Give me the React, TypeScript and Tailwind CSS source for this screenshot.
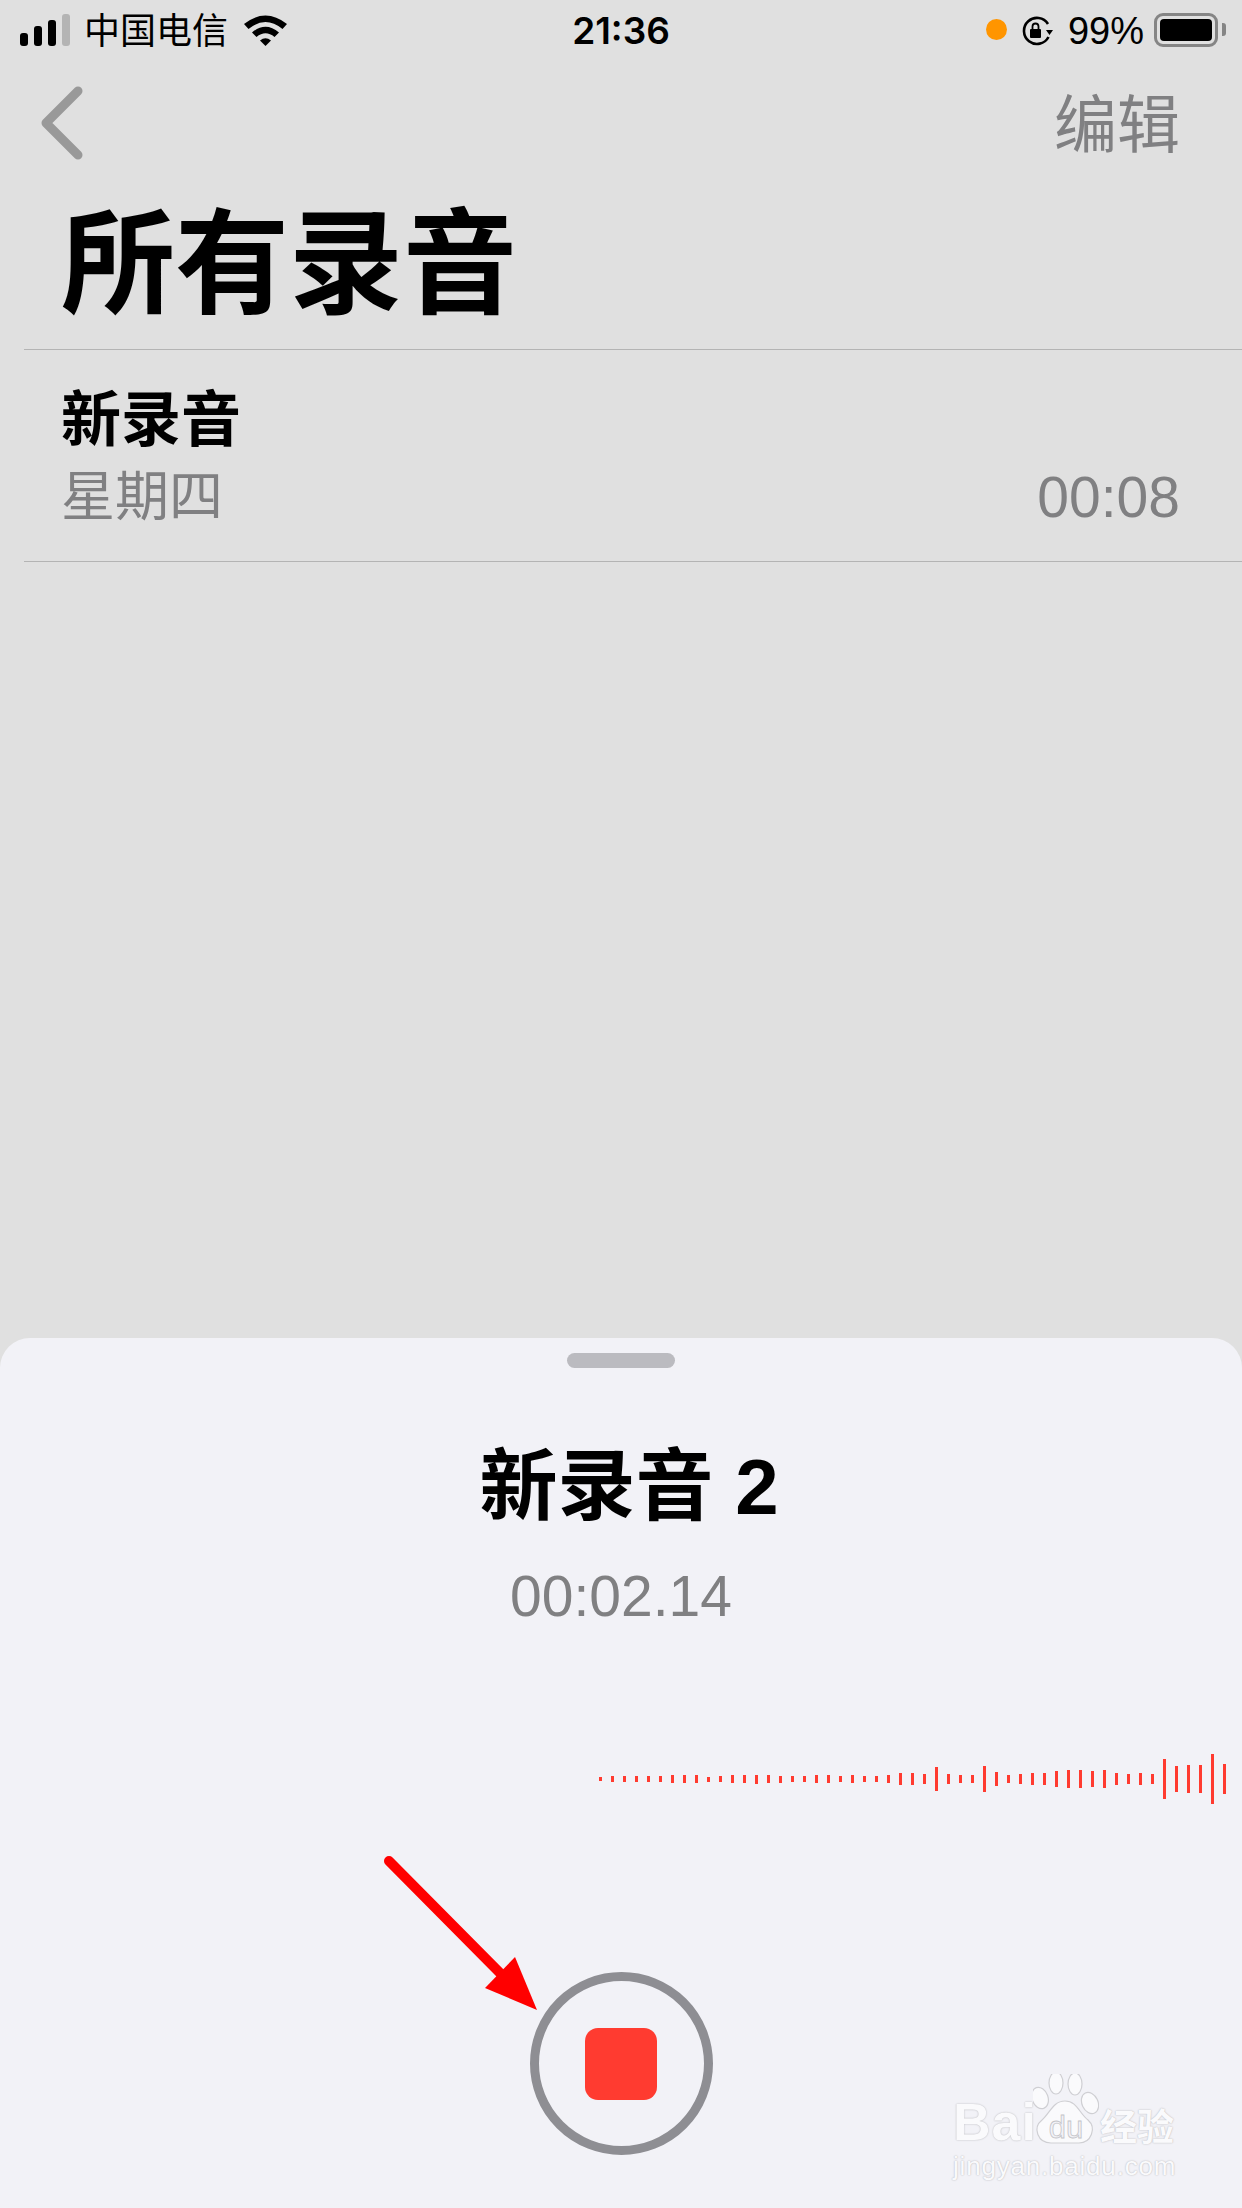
const BARS = [4, 6, 6, 6, 6, 6, 8, 8, 8, 5, 6, 8, 8, 9, 8, 7, 6, 6, 8, 8, 6, 8, 6, 6, 8, 12, 12, 10, 24, 10, 8, 8, 26, 14, 8, 10, 12, 12, 16, 18, 18, 16, 18, 12, 10, 12, 10, 40, 26, 28, 28, 50, 30];

const LATIN = "font-['Liberation_Sans','Noto_Sans_CJK_SC',sans-serif]";
const GLOW = "[text-shadow:0_0_2px_#c4c4c8,0_0_1px_#c4c4c8]";

function StatusBar() {
  return (
    <div className={`${LATIN} h-[62px] shrink-0 grid grid-cols-3 items-center text-black`}>
      <div className="flex items-center pl-[20px]">
        <div className="flex items-end gap-[6px] h-[32px] mt-[-2px]">
          <div className="w-[8px] h-[13px] rounded-[3px] bg-black" />
          <div className="w-[8px] h-[20px] rounded-[3px] bg-black" />
          <div className="w-[8px] h-[26px] rounded-[3px] bg-black" />
          <div className="w-[8px] h-[32px] rounded-[3px] bg-[#b4b4b4]" />
        </div>
        <span className="ml-[14px] mt-[2px] text-[36px] leading-[40px]">中国电信</span>
        <svg className="ml-[14px] mt-[-3px]" width="47" height="33" viewBox="0 0 47 33">
          <path d="M2 11 Q23.5 -6 45 11 L40.5 16 Q23.5 2 6.5 16 Z" fill="#000" />
          <path d="M10 19.5 Q23.5 8 37 19.5 L32.5 24 Q23.5 16.5 14.5 24 Z" fill="#000" />
          <path d="M18 27.5 Q23.5 23 29 27.5 L23.5 33 Z" fill="#000" />
        </svg>
      </div>
      <div className="text-center font-['Inter',sans-serif] text-[37px] leading-[40px] font-semibold">21:36</div>
      <div className="flex items-center justify-end pr-[16px]">
        <div className="w-[21px] h-[21px] rounded-full bg-[#ff9500] mt-[-3px]" />
        <svg className="ml-[14px]" width="32" height="30" viewBox="0 0 32 30">
          <path d="M27 8 A13 13 0 1 0 27.5 21" fill="none" stroke="#000" strokeWidth="2.6" />
          <path d="M25 14 L32 14 L28.5 19 Z" fill="#000" />
          <rect x="9" y="13" width="11" height="9" rx="1" fill="#000" />
          <path d="M11.5 13 V10.5 A3 3 0 0 1 17.5 10.5 V13" fill="none" stroke="#000" strokeWidth="1.8" />
        </svg>
        <span className="ml-[15px] text-[38px] leading-[40px]">99%</span>
        <div className="ml-[10px] w-[64px] h-[34px] rounded-[9px] border-[3px] border-[#858585] p-[3px] mt-[-3px]">
          <div className="w-full h-full rounded-[4px] bg-black" />
        </div>
        <div className="ml-[4px] w-[4px] h-[13px] rounded-r-[3px] bg-[#858585] mt-[-3px]" />
      </div>
    </div>
  );
}

function Watermark() {
  return (
    <div className="absolute left-[953px] top-[2074px] w-[230px] select-none text-[#fafafc]">
      <div className="flex items-end h-[72px]">
        <span className={`${LATIN} ${GLOW} text-[52px] leading-[52px] font-bold tracking-[1px] mb-[-2px]`}>Bai</span>
        <svg className="ml-[-4px]" width="66" height="72" viewBox="0 0 66 72">
          <g fill="#fafafc" stroke="#cfcfd3" strokeWidth="1.2">
            <ellipse cx="7" cy="24" rx="8" ry="11" transform="rotate(-20 7 24)" />
            <ellipse cx="23" cy="9" rx="7" ry="11" />
            <ellipse cx="42" cy="10" rx="7" ry="11" />
            <ellipse cx="57" cy="29" rx="8" ry="11" transform="rotate(-25 57 29)" />
            <path d="M32 27 C44 27 46 39 55 46 C64 54 58 69 46 69 L18 69 C5 69 -1 54 9 46 C17 39 20 27 32 27 Z" />
          </g>
          <text x="33" y="64" textAnchor="middle" fontFamily="Liberation Sans" fontSize="31" fill="#f2f2f7" stroke="#c4c4c8" strokeWidth="0.8">du</text>
        </svg>
        <span className={`ml-[1px] font-['Noto_Sans_CJK_SC',sans-serif] ${GLOW} text-[37px] leading-[42px] font-bold`}>经验</span>
      </div>
      <div className={`${LATIN} ${GLOW} mt-[2px] text-[26px] leading-[36px] tracking-[0.8px] whitespace-nowrap`}>jingyan.baidu.com</div>
    </div>
  );
}

export default function App() {
  return (
    <div className={`${LATIN} relative w-[1242px] h-[2208px] overflow-hidden bg-[#e0e0e0] flex flex-col`}>
      <StatusBar />

      <div className="flex-1">
        <div className="h-[120px] flex items-center justify-between pl-[40px] pr-[62px]">
          <svg className="mt-[2px]" width="44" height="74" viewBox="0 0 44 74">
            <path d="M38 5 L6 37 L38 69" fill="none" stroke="#999999" strokeWidth="9" strokeLinecap="round" strokeLinejoin="round" />
          </svg>
          <span className="mt-[5px] text-[63px] leading-[70px] text-[#808082]">编辑</span>
        </div>

        <h1 className="pl-[61px] pt-[8px] h-[167px] text-[114px] leading-[150px] font-semibold text-black">所有录音</h1>

        <div className="ml-[24px] h-[213px] border-y border-[#b4b4b4] pl-[37px] pr-[62px] flex flex-col">
          <div className="mt-[36px] text-[60px] leading-[70px] font-bold text-black">新录音</div>
          <div className="flex items-center justify-between h-[70px] mt-[6px] text-[#808082]">
            <span className="text-[54px] leading-[70px]">星期四</span>
            <span className="text-[57px] leading-[70px]">00:08</span>
          </div>
        </div>
      </div>

      <div className="h-[870px] shrink-0 rounded-t-[30px] bg-[#f2f2f7] flex flex-col items-center">
        <div className="mt-[15px] w-[108px] h-[15px] rounded-full bg-[#bbbbc0]" />
        <div className="mt-[64px] ml-[16px] text-[78px] leading-[110px] font-semibold text-black">新录音 2</div>
        <div className="mt-[19px] text-[57px] leading-[70px] text-[#808082]">00:02.14</div>
        <div className="self-stretch mt-[118px] h-[60px] flex items-center justify-end gap-[9px] pr-[16px]">
          {BARS.map((h, i) => (
            <div key={i} className="w-[3px] bg-[#ff3b30]" style={{ height: h }} />
          ))}
        </div>
        <button className="mt-[163px] w-[183px] h-[183px] rounded-full border-[9px] border-[#8e8e93] flex items-center justify-center">
          <div className="w-[72px] h-[72px] rounded-[13px] bg-[#ff3b30]" />
        </button>
      </div>

      {/* annotation arrow */}
      <svg className="absolute left-[380px] top-[1850px]" width="170" height="170" viewBox="380 1850 170 170">
        <path d="M389 1861 L503 1976" stroke="#ff0000" strokeWidth="10" strokeLinecap="round" fill="none" />
        <path d="M515 1957 L537 2010 L485 1988 Z" fill="#ff0000" />
      </svg>

      <Watermark />
    </div>
  );
}
